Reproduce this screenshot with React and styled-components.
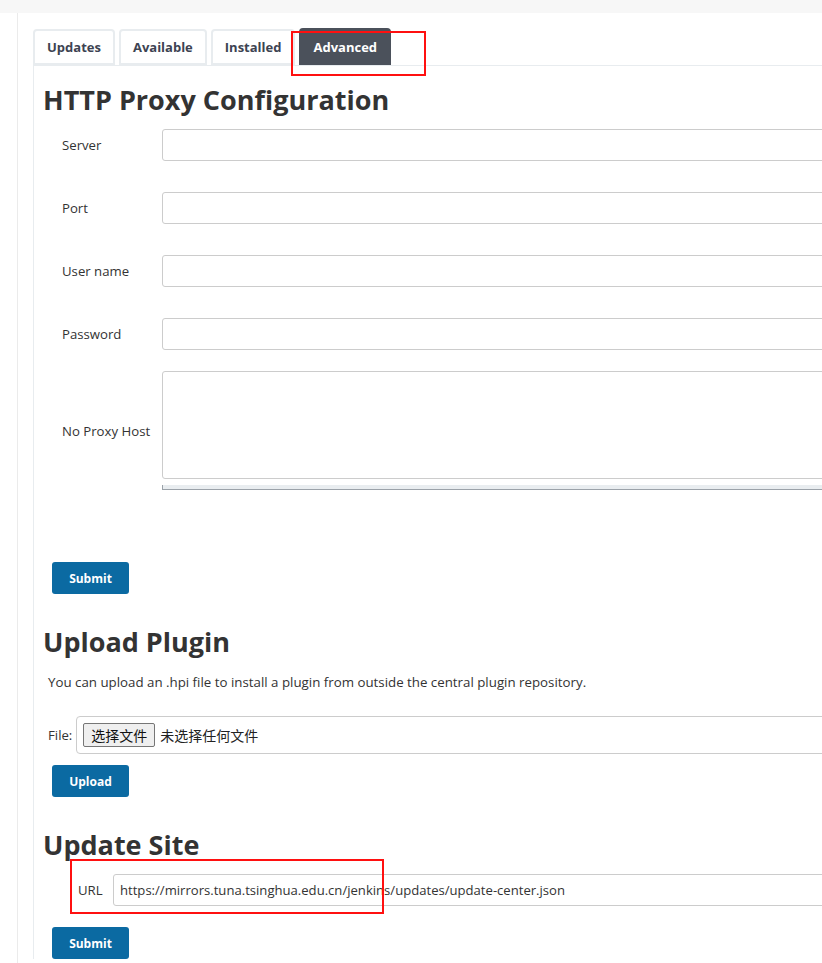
import styled, { createGlobalStyle } from "styled-components";

const GlobalStyle = createGlobalStyle`
  body {
    margin: 0;
    background: #fff;
    font-family: "Open Sans", "Noto Sans CJK SC", sans-serif;
    color: #333;
  }
`;

const tabs = ["Updates", "Available", "Installed", "Advanced"];

const proxyFields = ["Server", "Port", "User name", "Password"];

const App = () => {
  return (
    <Page>
      <GlobalStyle />
      <TopBar />
      <Main>
        <Sidebar />
        <Content>
          <Tabs>
            {tabs.map((t) => (
              <Tab key={t} $active={t === "Advanced"}>
                {t}
              </Tab>
            ))}
          </Tabs>
          <Panel>
            <Heading $top={17}>HTTP Proxy Configuration</Heading>
            <Fields>
              {proxyFields.map((f, i) => (
                <FieldRow key={f} $gap={i === 0 ? 12 : 31}>
                  <Label>{f}</Label>
                  <TextInput type={f === "Password" ? "password" : "text"} />
                </FieldRow>
              ))}
              <FieldRow $gap={21}>
                <Label>No Proxy Host</Label>
                <AreaWrap>
                  <TextArea />
                  <ResizeBar />
                </AreaWrap>
              </FieldRow>
            </Fields>
            <Button $top={72}>Submit</Button>

            <Heading $top={31}>Upload Plugin</Heading>
            <Note>
              You can upload an .hpi file to install a plugin from outside the
              central plugin repository.
            </Note>
            <FileRow>
              <span>File:</span>
              <FileBox>
                <PickButton>选择文件</PickButton>
                <FileName>未选择任何文件</FileName>
              </FileBox>
            </FileRow>
            <Button $top={11}>Upload</Button>

            <Heading $top={31}>Update Site</Heading>
            <UrlRow>
              <UrlLabel>URL</UrlLabel>
              <TextInput
                defaultValue="https://mirrors.tuna.tsinghua.edu.cn/jenkins/updates/update-center.json"
              />
            </UrlRow>
            <Button $top={21}>Submit</Button>
          </Panel>
        </Content>
      </Main>
      <Marker style={{ left: 291, top: 31, width: 135, height: 45 }} />
      <Marker style={{ left: 70, top: 859, width: 314, height: 55 }} />
    </Page>
  );
};

const Page = styled.div`
  position: relative;
  width: 100vw;
  min-height: 963px;
  overflow: hidden;
`;

const TopBar = styled.div`
  height: 13px;
  background: #f7f7f7;
`;

const Main = styled.div`
  display: flex;
`;

const Sidebar = styled.div`
  width: 17px;
  min-height: 950px;
  border-right: 1px solid #ebebeb;
  flex-shrink: 0;
`;

const Content = styled.div`
  flex: 1;
  padding: 15px 0 0 15px;
  min-width: 0;
`;

const Tabs = styled.div`
  display: flex;
  align-items: flex-end;
  gap: 4px;
  height: 37px;
`;

const Tab = styled.div`
  box-sizing: border-box;
  height: ${(p) => (p.$active ? "37px" : "36px")};
  display: flex;
  align-items: center;
  padding: 0 12px;
  font-size: 13px;
  font-weight: 700;
  color: ${(p) => (p.$active ? "#fff" : "#3d4352")};
  background: ${(p) => (p.$active ? "#4b515b" : "#fff")};
  border: 2px solid ${(p) => (p.$active ? "#4b515b" : "#e8ecef")};
  border-radius: 4px 4px 0 0;
`;

const Panel = styled.div`
  border-top: 1px solid #e8ecef;
  border-left: 1px solid #e8ecef;
  padding-left: 9px;
  margin-right: -20px;
`;

const Heading = styled.h2`
  margin: ${(p) => p.$top}px 0 0;
  font-size: 27px;
  line-height: 34px;
  font-weight: 700;
  color: #333;
`;

const Fields = styled.div`
  display: flex;
  flex-direction: column;
`;

const FieldRow = styled.div`
  display: flex;
  align-items: center;
  margin-top: ${(p) => p.$gap}px;
  padding-left: 19px;
`;

const Label = styled.label`
  width: 100px;
  flex-shrink: 0;
  font-size: 13.2px;
  color: #333;
`;

const TextInput = styled.input`
  flex: 1;
  box-sizing: border-box;
  height: 32px;
  border: 1px solid #ccc;
  border-radius: 3px;
  padding: 0 6px;
  font-family: "Open Sans", sans-serif;
  font-size: 13.1px;
  color: #333;
  outline: none;
`;

const AreaWrap = styled.div`
  flex: 1;
  display: flex;
  flex-direction: column;
  gap: 6px;
`;

const TextArea = styled.textarea`
  box-sizing: border-box;
  height: 108px;
  border: 1px solid #ccc;
  border-radius: 3px;
  resize: none;
  outline: none;
`;

const ResizeBar = styled.div`
  height: 4px;
  background: #e9edf0;
  border-bottom: 1px solid #9ba2a9;
  border-left: 1px solid #9ba2a9;
`;

const Button = styled.button`
  display: block;
  margin: ${(p) => p.$top}px 0 0 9px;
  width: 77px;
  height: 32px;
  border: none;
  border-radius: 3px;
  background: #0b6aa2;
  color: #fff;
  font-family: "Open Sans", sans-serif;
  font-size: 12px;
  font-weight: 700;
`;

const Note = styled.p`
  margin: 13px 0 0 5px;
  font-size: 13.3px;
  line-height: 20px;
  color: #333;
`;

const FileRow = styled.div`
  display: flex;
  align-items: center;
  gap: 4px;
  margin-top: 24px;
  padding-left: 5px;
  font-size: 13.2px;
`;

const FileBox = styled.div`
  flex: 1;
  box-sizing: border-box;
  height: 38px;
  display: flex;
  align-items: center;
  gap: 5px;
  padding-left: 6px;
  border: 1px solid #ccc;
  border-radius: 4px;
`;

const PickButton = styled.div`
  box-sizing: border-box;
  height: 24px;
  width: 72px;
  display: flex;
  align-items: center;
  justify-content: center;
  background: #efefef;
  border: 1px solid #767676;
  border-radius: 2px;
  font-family: "Noto Sans CJK SC", sans-serif;
  font-size: 14px;
  color: #111;
`;

const FileName = styled.span`
  font-family: "Noto Sans CJK SC", sans-serif;
  font-size: 14px;
  color: #222;
`;

const UrlRow = styled.div`
  display: flex;
  align-items: center;
  margin-top: 12px;
  padding-left: 35px;
`;

const UrlLabel = styled.label`
  width: 35px;
  flex-shrink: 0;
  font-size: 13.2px;
`;

const Marker = styled.div`
  position: absolute;
  box-sizing: border-box;
  border: 2px solid #ff1010;
  pointer-events: none;
`;

export default App;
